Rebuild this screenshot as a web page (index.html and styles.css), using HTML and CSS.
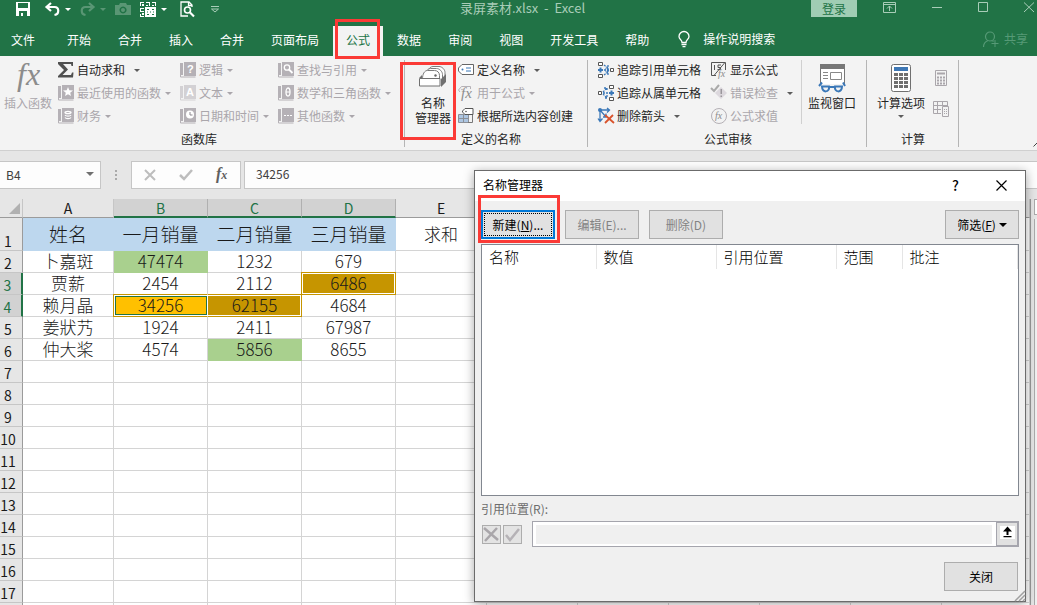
FILE: index.html
```html
<!DOCTYPE html>
<html lang="zh-CN">
<head>
<meta charset="utf-8">
<title>录屏素材.xlsx - Excel</title>
<link rel="stylesheet" href="styles.css">
</head>
<body>
<svg class="defs" aria-hidden="true">
  <symbol id="book" viewBox="0 0 16 16"><path fill="#b5b1b6" d="M0 1h3v12H0zM4 0h12v14H4z"/><path fill="none" stroke="#b5b1b6" d="M0.500 1v14h15"/></symbol>
</svg>
<div class="app">
  <header class="top">
    <div class="titlebar">
      <div class="quick">
        <button class="ic" aria-label="保存"><svg width="14" height="14" viewBox="0 0 14 14"><path fill="#fff" fill-rule="evenodd" d="M0 0h14v14H0zM2 1v5h10V1zM3 9v5h2v-3h2v3h4V9z"/></svg></button>
        <button class="ic undo" aria-label="撤消"><svg width="15" height="14" viewBox="0 0 15 14"><path fill="none" stroke="#fff" stroke-width="2.200" d="M6 1L1.500 5L6 9M2 5h7.500c5 0 5 7 0 8"/></svg><i class="arr"></i></button>
        <button class="ic redo" aria-label="恢复"><svg width="15" height="14" viewBox="0 0 15 14"><path fill="none" stroke="#fff" stroke-width="2.200" d="M9 1l4.500 4L9 9M13 5H5.500c-5 0-5 7 0 8"/></svg><i class="arr"></i></button>
        <button class="ic faint" aria-label="照相机"><svg width="16" height="12" viewBox="0 0 16 12"><path fill="#fff" fill-rule="evenodd" d="M0 2h4l1-2h6l1 2h4v10H0zM8 3.500a3.500 3.500 0 1 0 0.100 0z"/><circle cx="8" cy="7" r="2" fill="#fff"/></svg></button>
        <button class="ic" aria-label="选择对象"><svg width="16" height="15" viewBox="0 0 16 15"><path fill="#fff" d="M0 0h4v1H1v3H0zM6 0h4v4H9V1H6zM12 0h4v4h-1V1h-3zM2 2h2v2H2zM6 3h2v1H6zM12 3h2v1h-2zM0 6h4v1H1v2h3v1H0zM0 12h1v2h3v1H0zM2 11h2v2H2z"/><path fill="#fff" d="M5 5h11v10H5z"/><path stroke="#217346" d="M7 7.500h2M12 7.500h2M7 12.500h2M12 12.500h2M10 10h1M7 10h1M13 10h1"/></svg><i class="arr"></i></button>
        <button class="ic" aria-label="打印预览"><svg width="15" height="16" viewBox="0 0 15 16"><path fill="none" stroke="#fff" stroke-width="1.300" d="M12 6V4L9 1H1v14h7M8.500 1v3.500H12"/><circle cx="7.500" cy="9" r="3" fill="none" stroke="#fff" stroke-width="1.600"/><path stroke="#fff" stroke-width="2.200" d="M10 11.500l4 4"/></svg></button>
        <button class="ic more" aria-label="自定义快速访问工具栏"><svg width="8" height="7" viewBox="0 0 8 7"><path fill="none" stroke="#a9cdb8" d="M0 0.500h8M0.500 3l3.500 3l3.500-3z"/></svg></button>
      </div>
      <div class="doc">录屏素材.xlsx&nbsp; -&nbsp; Excel</div>
      <div class="winctl">
        <button class="login">登录</button>
        <button class="ic" aria-label="功能区显示选项"><svg width="13" height="11" viewBox="0 0 13 11"><path fill="none" stroke="#a9cdb8" d="M0.500 0.500h12v10H0.500zM0 2.500h13M6.500 9V4M4 6.500l2.500-2.500l2.500 2.500"/></svg></button>
        <button class="ic" aria-label="最小化"><svg width="10" height="11" viewBox="0 0 10 11"><path stroke="#a9cdb8" d="M0 5.500h10"/></svg></button>
        <button class="ic" aria-label="最大化"><svg width="10" height="11" viewBox="0 0 10 11"><path fill="none" stroke="#a9cdb8" d="M0.500 0.500h9v9h-9z"/></svg></button>
        <button class="ic" aria-label="关闭窗口"><svg width="10" height="11" viewBox="0 0 10 11"><path stroke="#a9cdb8" d="M0 0.500l10 9.500M10 0.500L0 10"/></svg></button>
      </div>
    </div>
    <nav class="tabs">
      <button class="tab file">文件</button>
      <button class="tab">开始</button>
      <button class="tab">合并</button>
      <button class="tab">插入</button>
      <button class="tab">合并</button>
      <button class="tab">页面布局</button>
      <button class="tab active">公式<i class="mark"></i></button>
      <button class="tab">数据</button>
      <button class="tab">审阅</button>
      <button class="tab">视图</button>
      <button class="tab">开发工具</button>
      <button class="tab">帮助</button>
      <button class="tell"><svg width="12" height="17" viewBox="0 0 12 17"><path fill="none" stroke="#fff" stroke-width="1.300" d="M4 11.500c0-3-3-3-3-6a5 5 0 0 1 10 0c0 3-3 3-3 6zM3.500 13.500h5M4.500 15.700h3"/></svg>操作说明搜索</button>
      <button class="share"><svg width="16" height="16" viewBox="0 0 16 16"><path fill="none" stroke="#569a76" stroke-width="1.200" d="M0.500 16c0-4 2-5.500 4.500-6.500M11 10H8.500"/><circle cx="7" cy="5.500" r="4.500" fill="none" stroke="#569a76" stroke-width="1.200"/><path stroke="#569a76" d="M12 9v7M8.500 12.500h7"/></svg>共享</button>
    </nav>
  </header>

  <section class="ribbon">
    <div class="group lib">
      <div class="tools">
        <button class="big off"><svg width="24" height="30" viewBox="0 0 24 30"><text x="1" y="22" class="fx fx-big">fx</text></svg>插入函数</button>
        <div class="col">
          <button class="cmd split"><svg width="16" height="16" viewBox="0 0 16 16"><path fill="#505050" d="M0 0h15v4h-1.500L13 2H5l5 5.500L4.500 13H13l1-2.500h1.500L15 15.500H0V14l6-6L0 2z"/></svg>自动求和<i class="arr"></i></button>
          <button class="cmd off"><svg width="16" height="16"><use href="#book"/><path fill="#fff" d="M10 2l1.300 3.300L15 5.500l-2.800 2.200L13 11l-3-1.800L7 11l0.800-3.300L5 5.500l3.700-0.200z"/></svg>最近使用的函数<i class="arr"></i></button>
          <button class="cmd off"><svg width="16" height="16"><use href="#book"/><path fill="none" stroke="#fff" stroke-width="1.300" d="M7 4.500c0-1.500 6-1.500 6 0s-6 1.500-6 0M7 7c1 1.500 5 1.500 6 0M7 9.500c1 1.500 5 1.500 6 0"/></svg>财务<i class="arr"></i></button>
        </div>
        <div class="col">
          <button class="cmd off"><svg width="16" height="16"><use href="#book"/><text x="7" y="11" class="glyph">?</text></svg>逻辑<i class="arr"></i></button>
          <button class="cmd off"><svg width="16" height="16"><use href="#book" opacity=".5"/><text x="6" y="11" class="glyph">A</text></svg>文本<i class="arr"></i></button>
          <button class="cmd off"><svg width="16" height="16"><use href="#book"/><circle cx="10" cy="6.500" r="4" fill="#fff"/><path fill="none" stroke="#8d8990" d="M10 4v3h2.500"/></svg>日期和时间<i class="arr"></i></button>
        </div>
        <div class="col">
          <button class="cmd off"><svg width="16" height="16"><use href="#book"/><circle cx="9" cy="5.500" r="2.700" fill="none" stroke="#fff" stroke-width="1.300"/><path stroke="#fff" stroke-width="1.800" d="M11 7.500l3.500 3.500"/></svg>查找与引用<i class="arr"></i></button>
          <button class="cmd off"><svg width="16" height="16"><use href="#book"/><ellipse cx="10" cy="7" rx="2" ry="4" fill="none" stroke="#fff" stroke-width="1.300"/><path stroke="#fff" d="M8 7h4"/></svg>数学和三角函数<i class="arr"></i></button>
          <button class="cmd off"><svg width="16" height="16"><use href="#book"/><path fill="#fff" d="M6 7h2v1H6zM9 7h2v1H9zM12 7h2v1h-2z"/></svg>其他函数<i class="arr"></i></button>
        </div>
      </div>
      <div class="name">函数库</div>
    </div>

    <div class="group names">
      <div class="tools">
        <button class="big"><svg width="28" height="30" viewBox="0 0 28 30"><g fill="#fff" stroke="#7d7d7d"><path d="M9 8c1-3 3-4.500 5-4.500h6c3 0 6 3 6 6V15"/><path d="M6.500 10c1-3 3-4.500 5-4.500h6c3 0 6 3 6 6V17"/><path d="M3.500 16c0-5 2-8.500 5-8.500h7c3 0 5 2 5 5V17z"/></g><circle cx="16.500" cy="12.500" r="1.200" fill="#666"/><path fill="#707070" d="M22 16l5-5v8l-5 5zM0 15l3-3v3z"/><path fill="#fff" stroke="#707070" d="M0.500 15.500h20.500v7.500H0.500z"/></svg>名称<br>管理器<i class="mark"></i></button>
        <div class="col">
          <button class="cmd split"><svg width="16" height="16" viewBox="0 0 16 16"><path fill="#fff" stroke="#666" d="M4 2.500h11.500v10H4L0.500 9V6z"/><circle cx="4.500" cy="7.500" r="1" fill="#3b78b8"/><path stroke="#3b78b8" d="M8 6h5M8 9h5"/></svg>定义名称<i class="arr"></i></button>
          <button class="cmd off"><svg width="16" height="16" viewBox="0 0 16 16"><path fill="none" stroke="#b5b1b6" d="M2 7L0.500 5l3-3.500h9V4"/><circle cx="4" cy="4.500" r="0.800" fill="#b5b1b6"/><text x="3" y="13" class="fx fx-small">fx</text></svg>用于公式<i class="arr"></i></button>
          <button class="cmd"><svg width="16" height="16" viewBox="0 0 16 16"><path fill="#adc6e2" d="M1 7h9v7H1z"/><path fill="none" stroke="#8b9098" d="M0.500 6.500h10v8H0.500zM5.500 6v9M0 10.500h11"/><path fill="#fff" stroke="#555" d="M7 0.500h8v6H7L4.500 4V3z"/><circle cx="8" cy="3.500" r="0.800" fill="#555"/><path fill="none" stroke="#777" d="M10 14.500h4.500V7"/></svg>根据所选内容创建</button>
        </div>
      </div>
      <div class="name">定义的名称</div>
    </div>

    <div class="group audit">
      <div class="tools">
        <div class="col">
          <button class="cmd"><svg width="16" height="16" viewBox="0 0 16 16"><path fill="#fff" stroke="#555" d="M0.500 0.500h4v3h-4zM0.500 12.500h4v3h-4zM12.500 6.500h3v3h-3z"/><path stroke="#3b78b8" stroke-width="2" d="M0 8h5M2.500 5.500v5"/><path stroke="#3b78b8" stroke-width="1.300" d="M6 3l4 3M10 3v3.500H7M6 8h5M9 6l2 2l-2 2M6 13l4-3M10 13V9.500H7" fill="none" stroke-dasharray="2 1"/></svg>追踪引用单元格</button>
          <button class="cmd"><svg width="16" height="16" viewBox="0 0 16 16"><path fill="#fff" stroke="#555" d="M0.500 6.500h3v3h-3zM11.500 0.500h4v3h-4zM11.500 12.500h4v3h-4z"/><path stroke="#3b78b8" stroke-width="2" d="M11 8h5M13.500 5.500v5"/><path stroke="#3b78b8" stroke-width="1.300" d="M5 7l4-4M6 3h3v3M5 8h5M5 9l4 4M9 10v3H6" fill="none" stroke-dasharray="2 1"/></svg>追踪从属单元格</button>
          <button class="cmd split"><svg width="16" height="16" viewBox="0 0 16 16"><path fill="none" stroke="#3b78b8" stroke-width="1.300" d="M2 1v12M0 10.500L2 13.500l2.500-3M2 2h9M9 0l2.500 2L9 4.500M2 2l6 7M8 5.500V9H5"/><circle cx="2" cy="2" r="2" fill="#3b78b8"/><path stroke="#d9532c" stroke-width="1.800" d="M7 7l9 8M15 7l-8 8"/></svg>删除箭头<i class="arr"></i></button>
        </div>
        <div class="col">
          <button class="cmd"><svg width="16" height="16" viewBox="0 0 16 16"><path fill="none" stroke="#555" d="M5 13.500H0.500V0.500h14V8M13.500 1L3 13.500M3.500 3v5M10 3H7v2.500h2.500v2H6.500"/><text x="7" y="15" class="fx fx-tiny">fx</text></svg>显示公式</button>
          <button class="cmd off split"><svg width="16" height="16" viewBox="0 0 16 16"><path fill="none" stroke="#aaa" stroke-width="2" d="M0 3l3 3l5-6"/><path fill="#dcd8dd" d="M10 2l6 6l-6 6l-6-6z"/><path fill="#9a969c" d="M9.500 4h1.500v5H9.500zM9.500 10.500h1.500V12H9.500z"/></svg>错误检查<i class="arr"></i></button>
          <button class="cmd off"><svg width="16" height="16" viewBox="0 0 16 16"><circle cx="8" cy="8" r="7.500" fill="none" stroke="#b5b1b6"/><text x="4" y="11" class="fx fx-tiny">fx</text></svg>公式求值</button>
        </div>
        <button class="big watch"><svg width="28" height="30" viewBox="0 0 28 30"><path fill="#fff" stroke="#777" d="M2.500 1.500h24v20h-24z"/><path fill="#777" d="M2 1h25v5H2z"/><path fill="#f3f3f3" d="M1 21h28v3H1z"/><path fill="none" stroke="#888" d="M12.500 9.500h11v7h-11zM5 9.500h5M5 12.500h5M5 15.500h5"/><g fill="#f3f3f3" stroke="#3b78b8" stroke-width="2"><path d="M1 23l3-3.500M27 23l-2-3.500M4 23.500h7c1 6-7 7-7 0zM17 23.500h7c0 7-8 6-7 0zM11 24h6"/></g></svg>监视窗口</button>
      </div>
      <div class="name">公式审核</div>
    </div>

    <div class="group calc">
      <div class="tools">
        <button class="big"><svg width="20" height="30" viewBox="0 0 20 30"><rect x="0.500" y="1.500" width="19" height="27" rx="2" fill="#fff" stroke="#707070"/><path fill="#3f78b5" d="M3 4h14v4H3z"/><path fill="none" stroke="#707070" stroke-width="3" stroke-dasharray="4 1" d="M3 11.500h14M3 15.500h14M3 19.500h14M3 23.500h14"/></svg>计算选项<i class="arr"></i></button>
        <div class="minis">
          <button class="ic" aria-label="开始计算"><svg width="12" height="16" viewBox="0 0 12 16"><path fill="none" stroke="#aaa6ab" d="M0.500 0.500h11v15H0.500z"/><path stroke="#aaa6ab" stroke-width="2" d="M2 3.500h8"/><path stroke="#aaa6ab" stroke-width="2" stroke-dasharray="2 1" d="M2 7.500h8M2 10.500h8M2 13.500h8"/></svg></button>
          <button class="ic" aria-label="计算工作表"><svg width="16" height="16" viewBox="0 0 16 16"><path fill="none" stroke="#aaa6ab" d="M8 12.500H0.500V0.500h14V5M0 4.500h15M0 8.500h8M4.500 0v13M9.500 0v5"/><path fill="#f3f3f3" stroke="#aaa6ab" d="M9.500 5.500h6v10h-6z"/><path stroke="#aaa6ab" stroke-dasharray="1 1" d="M11 8.500h3M11 10.500h3M11 12.500h3"/></svg></button>
        </div>
      </div>
      <div class="name">计算</div>
    </div>
    <button class="ic collapse" aria-label="折叠功能区"><svg width="8" height="5" viewBox="0 0 8 5"><path fill="none" stroke="#444" d="M0.500 4.500L4 1l3.500 3.500"/></svg></button>
  </section>

  <section class="formula">
    <div class="namebox"><input aria-label="名称框" value="B4"><i class="arr"></i></div>
    <svg class="dots" width="2" height="12" viewBox="0 0 2 12"><path fill="#aaa" d="M0 1h2v2H0zM0 5h2v2H0zM0 9h2v2H0z"/></svg>
    <div class="fbtns">
      <button class="ic" aria-label="取消"><svg width="12" height="12" viewBox="0 0 12 12"><path stroke="#bdbdbd" stroke-width="2" d="M1 1l10 10M11 1L1 11"/></svg></button>
      <button class="ic" aria-label="输入"><svg width="14" height="12" viewBox="0 0 14 12"><path fill="none" stroke="#bdbdbd" stroke-width="2.500" d="M1 6l4 4l8-9"/></svg></button>
      <button class="ic" aria-label="插入函数"><svg width="14" height="16" viewBox="0 0 14 16"><text x="1" y="12" class="fx fx-bar">f<tspan class="fx-sub">x</tspan></text></svg></button>
    </div>
    <input class="fedit" aria-label="编辑栏" value="34256">
  </section>

  <main class="sheet">
    <div class="gridwrap">
    <table class="grid">
      <colgroup><col class="c-num"><col class="c-a"><col class="c-m"><col class="c-m"><col class="c-m"><col class="c-d"><col class="c-d"><col class="c-d"><col class="c-d"><col class="c-d"><col class="c-d"><col></colgroup>
      <thead><tr><th class="corner"><svg width="11" height="11" viewBox="0 0 11 11"><path fill="#b1b1b1" d="M11 0v11H0z"/></svg></th><th>A</th><th class="on">B</th><th class="on">C</th><th class="on">D</th><th>E</th><th></th><th></th><th></th><th></th><th></th><th></th></tr></thead>
      <tbody>
        <tr class="first"><th>1</th><td class="blue">姓名</td><td class="blue">一月销量</td><td class="blue">二月销量</td><td class="blue">三月销量</td><td class="sum">求和</td><td></td><td></td><td></td><td></td><td></td><td></td></tr>
        <tr><th>2</th><td>卜嘉斑</td><td class="green">47474</td><td>1232</td><td>679</td><td></td><td></td><td></td><td></td><td></td><td></td><td></td></tr>
        <tr><th class="on">3</th><td>贾薪</td><td>2454</td><td>2112</td><td class="gold picked">6486</td><td></td><td></td><td></td><td></td><td></td><td></td><td></td></tr>
        <tr><th class="on">4</th><td>赖月晶</td><td class="amber picked current">34256</td><td class="gold picked joined">62155</td><td>4684</td><td></td><td></td><td></td><td></td><td></td><td></td><td></td></tr>
        <tr><th>5</th><td>姜狀艿</td><td>1924</td><td>2411</td><td>67987</td><td></td><td></td><td></td><td></td><td></td><td></td><td></td></tr>
        <tr><th>6</th><td>仲大桨</td><td>4574</td><td class="green">5856</td><td>8655</td><td></td><td></td><td></td><td></td><td></td><td></td><td></td></tr>
        <tr><th>7</th><td></td><td></td><td></td><td></td><td></td><td></td><td></td><td></td><td></td><td></td><td></td></tr>
        <tr><th>8</th><td></td><td></td><td></td><td></td><td></td><td></td><td></td><td></td><td></td><td></td><td></td></tr>
        <tr><th>9</th><td></td><td></td><td></td><td></td><td></td><td></td><td></td><td></td><td></td><td></td><td></td></tr>
        <tr><th>10</th><td></td><td></td><td></td><td></td><td></td><td></td><td></td><td></td><td></td><td></td><td></td></tr>
        <tr><th>11</th><td></td><td></td><td></td><td></td><td></td><td></td><td></td><td></td><td></td><td></td><td></td></tr>
        <tr><th>12</th><td></td><td></td><td></td><td></td><td></td><td></td><td></td><td></td><td></td><td></td><td></td></tr>
        <tr><th>13</th><td></td><td></td><td></td><td></td><td></td><td></td><td></td><td></td><td></td><td></td><td></td></tr>
        <tr><th>14</th><td></td><td></td><td></td><td></td><td></td><td></td><td></td><td></td><td></td><td></td><td></td></tr>
        <tr><th>15</th><td></td><td></td><td></td><td></td><td></td><td></td><td></td><td></td><td></td><td></td><td></td></tr>
        <tr><th>16</th><td></td><td></td><td></td><td></td><td></td><td></td><td></td><td></td><td></td><td></td><td></td></tr>
        <tr><th>17</th><td></td><td></td><td></td><td></td><td></td><td></td><td></td><td></td><td></td><td></td><td></td></tr>
        <tr><th></th><td></td><td></td><td></td><td></td><td></td><td></td><td></td><td></td><td></td><td></td><td></td></tr>
      </tbody>
    </table>
    </div>
    <div class="vscroll"><div class="cap"></div><div class="track"></div></div>
  </main>

  <div class="dialog" role="dialog" aria-labelledby="dlg-title">
    <div class="dlg-head">
      <span id="dlg-title">名称管理器</span>
      <button class="ic help" aria-label="帮助">?</button>
      <button class="ic" aria-label="关闭对话框"><svg width="11" height="11" viewBox="0 0 11 11"><path stroke="#000" stroke-width="1.200" d="M0.500 0.500l10 10M10.500 0.500l-10 10"/></svg></button>
    </div>
    <div class="dlg-body">
      <div class="actions">
        <button class="btn primary"><span>新建(<u>N</u>)...</span><i class="mark"></i></button>
        <button class="btn" disabled>编辑(E)...</button>
        <button class="btn" disabled>删除(D)</button>
        <button class="btn filter"><span>筛选(<u>F</u>)</span><i class="arr"></i></button>
      </div>
      <div class="list">
        <table>
          <colgroup><col class="l-name"><col class="l-val"><col class="l-val"><col class="l-scope"><col></colgroup>
          <tr><th>名称</th><th>数值</th><th>引用位置</th><th>范围</th><th>批注</th></tr>
        </table>
      </div>
      <label class="reflabel" for="ref">引用位置(R):</label>
      <div class="refrow">
        <button class="sq" disabled aria-label="取消更改"><svg width="17" height="17" viewBox="0 0 17 17"><path stroke="#a9a6aa" stroke-width="2.500" d="M1 2l14 12M14 2L2 15"/></svg></button>
        <button class="sq" disabled aria-label="确认更改"><svg width="17" height="17" viewBox="0 0 17 17"><path fill="none" stroke="#b5b2b6" stroke-width="2.500" d="M2 9l4 5l9-11"/></svg></button>
        <div class="refbox"><input id="ref" disabled><button class="pick" aria-label="折叠对话框"><svg width="15" height="13" viewBox="0 0 15 13"><path fill="#fff" d="M0 0h15v13H0z"/><path stroke="#000" stroke-width="2" d="M7.500 9V3"/><path d="M7.500 0.500L12 5.500H3zM3.500 10h8v1.200h-8z"/></svg></button></div>
      </div>
      <div class="foot"><button class="btn">关闭</button></div>
    </div>
    <svg class="grip" width="10" height="10" viewBox="0 0 10 10"><path stroke="#a0a0a0" stroke-width="1.500" d="M0 10L10 0M4 10l6-6M8 10l2-2"/></svg>
  </div>
</div>
</body>
</html>
```

FILE: styles.css
```css
* { box-sizing: border-box; }

body {
  margin: 0;
  font: 12px/16px "Noto Sans CJK SC", sans-serif;
  color: #262626;
}

button, input {
  margin: 0;
  padding: 0;
  border: 0;
  background: none;
  font: inherit;
  color: inherit;
}

svg { display: block; flex: none; overflow: visible; }
.defs { position: absolute; width: 0; height: 0; }

.app {
  position: relative;
  display: flex;
  flex-direction: column;
  height: 100vh;
  overflow: hidden;
  background: #e6e6e6;
}

.ic { display: flex; align-items: center; }

.arr {
  flex: none;
  width: 0;
  border: 3px solid transparent;
  border-top-color: currentColor;
  border-bottom: 0;
}

.mark {
  position: absolute;
  border: 3px solid #fb3a36;
  pointer-events: none;
  z-index: 2;
}

.fx { font-family: "Liberation Serif", serif; font-style: italic; fill: #8c8c8c; }
.fx-big { font-size: 32px; }
.fx-small { font-size: 15px; }
.fx-tiny { font-size: 10px; }
.fx-bar { font-size: 16px; font-weight: bold; fill: #606060; }
.fx-sub { font-size: 12px; }
.glyph { font: bold 11px "Liberation Sans", sans-serif; fill: #fff; }

/* Title bar */
.top { background: #217346; color: #fff; }

.titlebar {
  display: grid;
  grid-template-columns: 1fr auto 1fr;
  height: 24px;
  padding-left: 16px;
}

.quick { display: flex; align-items: center; height: 18px; }
.quick .ic { margin-right: 15px; }
.quick .undo, .quick .redo { gap: 5px; margin-right: 9px; }
.quick .redo, .quick .faint { opacity: .25; }
.quick .faint { margin-right: 9px; }
.quick .ic:nth-child(5) { gap: 5px; margin-right: 13px; }
.quick .ic:nth-child(6) { margin-right: 16px; }

.doc { padding-right: 8px; color: #a9cdb8; font-size: 13px; }

.winctl {
  display: flex;
  justify-content: flex-end;
  align-items: flex-start;
  padding-right: 3px;
}
.winctl .ic { height: 14px; margin-left: 36px; }
.login {
  height: 17px;
  width: 46px;
  background: #a0cdb4;
  color: #217346;
  line-height: 15px;
}
.winctl .login + .ic { margin-left: 26px; }

.tabs { display: flex; gap: 1px; height: 32px; }
.tab { position: relative; height: 30px; margin-top: 2px; padding: 0 13px 3px; white-space: nowrap; }
.file { padding-left: 11px; margin-right: 5px; }
.active { background: #f3f3f3; color: #217346; }
.active .mark { inset: -7px 3px -3px 2px; }
.tell, .share { display: flex; align-items: center; gap: 13px; padding: 0 0 2px 15px; white-space: nowrap; }
.share { gap: 5px; margin-left: auto; padding-right: 9px; color: #569a76; }

/* Ribbon */
.ribbon {
  display: flex;
  height: 95px;
  padding-top: 4px;
  background: #f3f3f3;
  border-bottom: 1px solid #d0d0d0;
}
.group {
  display: flex;
  flex-direction: column;
  justify-content: space-between;
  height: 87px;
  border-right: 1px solid #b5b5b5;
}
.tools { display: flex; align-items: flex-start; height: 70px; }
.name { text-align: center; line-height: 16px; }
.col { display: flex; flex-direction: column; padding-right: 8px; }
.cmd {
  display: flex;
  align-items: center;
  gap: 3px;
  height: 23px;
  padding-bottom: 3px;
  white-space: nowrap;
}
.cmd .arr { margin-left: 1px; }
.cmd.split .arr { margin-left: 6px; color: #5c5c5c; }
.off { color: #aaa6ab; }
.big {
  position: relative;
  display: flex;
  flex-direction: column;
  align-items: center;
  padding-top: 3px;
  line-height: 15px;
  white-space: nowrap;
}
.big svg { margin-bottom: 2px; }
.big .arr { margin-top: 5px; color: #5c5c5c; }

.lib { width: 405px; padding-left: 4px; }
.lib .col { padding-left: 6px; width: 122px; padding-right: 0; }
.lib .col:nth-child(3) { width: 98px; }
.lib .name { padding-right: 10px; }

.names { padding-left: 10px; }
.names .big { display: block; padding-bottom: 5px; }
.names .big svg { margin: 0 auto 2px; }
.names .big .mark { inset: 2px -5px -10px -15px; }
.names .col { padding: 0 14px 0 7px; }
.names .name { padding-right: 20px; }

.audit { padding-left: 10px; }
.audit .col + .col { padding-left: 2px; }
.audit .name { padding-right: 8px; }
.watch { height: 64px; border-left: 1px solid #d0d0d0; padding-left: 6px; padding-right: 10px; }

.calc { padding: 0 9px 0 10px; }
.calc .big { padding-right: 8px; }
.minis { display: flex; flex-direction: column; align-items: center; gap: 15px; padding-top: 10px; }
.collapse { align-self: flex-end; margin: 0 -4px 3px auto; }

/* Formula bar */
.formula { display: flex; align-items: center; height: 48px; }
.namebox, .fbtns, .fedit {
  height: 28px;
  background: #fdfdfd;
  border: 1px solid #c6c6c6;
}
.namebox { display: flex; align-items: center; width: 101px; border-left: 0; padding-right: 6px; color: #404040; }
.namebox input { flex: 1; min-width: 0; padding-left: 6px; }
.namebox .arr { border-width: 4px 4px 0; margin-bottom: 3px; color: #707070; }
.dots { margin: 0 14px; }
.fbtns { display: flex; align-items: center; justify-content: space-between; width: 110px; padding: 0 11px 0 12px; }
.fedit { flex: 1; min-width: 0; margin-left: 3px; padding: 0 0 3px 11px; border-right: 0; color: #404040; }

/* Worksheet */
.sheet { display: flex; flex: 1; min-height: 0; }
.gridwrap { flex: 1; overflow: hidden; border-right: 1px solid #999; background: #fff; }
.grid {
  width: 100%;
  table-layout: fixed;
  border-collapse: separate;
  border-spacing: 0;
  color: #1a1a1a;
}
.c-num { width: 23px; }
.c-a { width: 91px; }
.c-m { width: 94px; }
.c-d { width: 91px; }

.grid th, .grid td { padding: 0; white-space: nowrap; text-align: center; }
.grid th { font-size: 14px; font-weight: 400; background: #e6e6e6; }
.grid thead th { height: 19px; line-height: 16px; border-right: 1px solid #c6c6c6; border-bottom: 1px solid #9b9b9b; }
.grid thead th.on { background: #d2d2d2; color: #217346; border-right-color: #b0b0b0; border-bottom: 2px solid #217346; }
.corner svg { margin-left: 9px; }
.grid tbody th {
  padding-right: 6px;
  vertical-align: bottom;
  line-height: 18px;
  border-right: 1px solid #9b9b9b;
  border-bottom: 1px solid #c6c6c6;
}
.grid tbody th.on { background: #d2d2d2; color: #217346; border-right: 2px solid #217346; }
.grid td {
  position: relative;
  height: 22px;
  padding-bottom: 2px;
  font-size: 17px;
  font-weight: 300;
  line-height: 19px;
  border-right: 1px solid #d4d4d4;
  border-bottom: 1px solid #d4d4d4;
}
.grid .first td { height: 33px; font-size: 19px; }
.grid .first .sum { font-size: 17px; }
.grid .blue { background: #bdd7ee; border-color: #bdd7ee; }
.grid .green { background: #a9d08e; border-color: #a9d08e; }
.grid .amber { background: #ffc000; }
.grid .gold { background: #c69500; }
.picked::after {
  content: "";
  position: absolute;
  inset: -1px;
  z-index: 1;
  border: 1px solid #c69500;
  box-shadow: inset 0 0 0 1px #fff;
}
.current::after { border-right: 0; box-shadow: inset 0 0 0 1px #fff, inset 0 0 0 2px #217346; }
.joined::after { border-left-color: #fff; box-shadow: inset 0 1px #fff, inset -1px 0 #fff, inset 0 -1px #fff; }

.vscroll { display: flex; flex-direction: column; gap: 4px; width: 6px; padding-left: 3px; }
.cap { height: 16px; border: 1px solid #ababab; border-right: 0; background: #fff; }
.track { flex: 1; border-left: 1px solid #ababab; background: #f0f0f0; }

/* Name manager */
.dialog {
  position: absolute;
  left: 474px;
  top: 170px;
  width: 552px;
  border: 1px solid #6b6b6b;
  background: #f0f0f0;
  box-shadow: 0 2px 10px rgba(0, 0, 0, .35);
  color: #000;
  z-index: 3;
}
.dlg-head { display: flex; align-items: center; height: 30px; padding: 0 18px 2px 8px; background: #fff; }
.help { margin: 0 37px 0 auto; font-size: 14px; font-weight: 500; }
.dlg-body { padding: 9px 6px 10px; }
.actions { display: flex; gap: 10px; }
.btn {
  position: relative;
  width: 74px;
  height: 29px;
  border: 1px solid #adadad;
  background: #e1e1e1;
}
.btn:disabled { color: #838383; }
.primary { border: 2px solid #0078d7; padding: 1px; }
.primary span { display: block; border: 1px dotted #000; line-height: 21px; }
.primary .mark { inset: -17px -7px -6px -5px; }
.filter { display: flex; align-items: center; justify-content: center; gap: 3px; margin-left: auto; }
.filter .arr { border-width: 4px 4px 0; }

.list { height: 252px; margin-top: 5px; border: 1px solid #828790; background: #fff; }
.list table { width: 100%; table-layout: fixed; border-collapse: collapse; }
.list th {
  height: 24px;
  padding: 0 0 0 7px;
  border-right: 1px solid #e5e5e5;
  font-size: 15px;
  font-weight: 300;
  text-align: left;
}
.l-name { width: 114px; }
.l-val { width: 120px; }
.l-scope { width: 66px; }

.reflabel { display: block; margin-top: 5px; color: #6d6d6d; }
.refrow { display: flex; align-items: center; gap: 2px; margin-top: 4px; padding-left: 1px; }
.sq { width: 19px; height: 19px; border: 1px solid #adadad; background: #e3e3e3; }
.sq svg { margin: 0 auto; }
.refbox {
  display: flex;
  flex: 1;
  height: 26px;
  margin-left: 8px;
  border: 1px solid #a5a5ad;
  background: #fff;
}
.refbox input { flex: 1; min-width: 0; margin: 3px 4px 2px 3px; background: #f0f0f0; }
.pick { display: flex; justify-content: center; width: 22px; padding-top: 3px; border: 1px solid #a5a5ad; background: #e1e1e1; }
.foot { display: flex; justify-content: flex-end; margin-top: 15px; padding-right: 1px; }
.grip { position: absolute; right: 0; bottom: 0; }
```
